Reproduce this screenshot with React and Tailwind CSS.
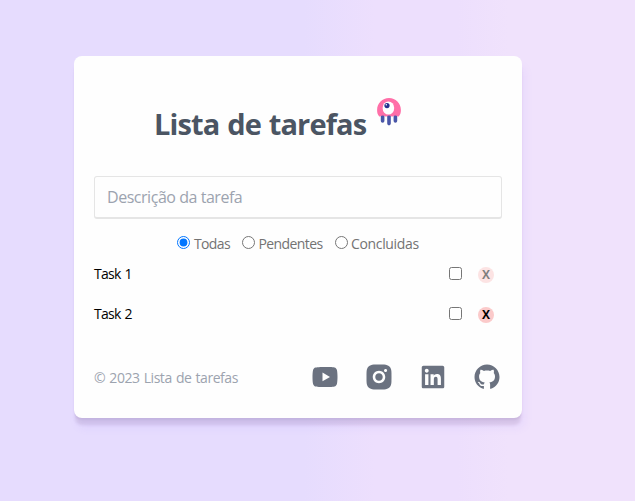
import {
  RiYoutubeFill,
  RiInstagramFill,
  RiLinkedinBoxFill,
  RiGithubFill,
} from "react-icons/ri";

const filters = [
  { label: "Todas", box: "w-[65px]", text: "ml-[4px]", spacing: "tracking-[-0.65px]" },
  { label: "Pendentes", box: "w-[93px]", text: "ml-[3.5px]", spacing: "tracking-[-0.6px]" },
  { label: "Concluidas", box: "w-[84px]", text: "ml-[3px]", spacing: "tracking-[-0.35px]" },
];

const tasks = [
  { name: "Task 1", button: "opacity-50" },
  { name: "Task 2", button: "opacity-100" },
];

function Mascot() {
  return (
    <svg viewBox="0 0 26 30" className="ml-[10px] mt-[-25px] h-[30px] w-[26px] shrink-0">
      <g stroke="#4956a8" strokeWidth="3.6" strokeLinecap="round">
        <path d="M6.6 18v6M13 18v8.6M19.4 18v6" />
      </g>
      <path
        d="M3.5 19.6C1.6 18 1.1 15.6 1.1 13 1.1 6.3 6.4 1 13 1s11.9 5.3 11.9 12c0 2.6-.6 5-2.4 6.6-.8.3-1.2-1.1-3.3-1.1-1.9 0-1.9 1.1-3.1 1.1s-1.2-1.1-3.1-1.1-1.9 1.1-3.1 1.1-1.2-1.1-3.1-1.1c-2.1 0-2.5 1.4-3.3 1.1z"
        fill="#ff6fa8"
      />
      <ellipse cx="12.4" cy="11" rx="5.8" ry="6.6" fill="#fff" />
      <circle cx="11" cy="8.6" r="2.6" fill="#24308f" />
      <circle cx="10.3" cy="7.8" r="0.8" fill="#fff" />
    </svg>
  );
}

export default function App() {
  return (
    <div className="h-[501px] w-[635px] overflow-hidden bg-[linear-gradient(90deg,#e6dcfe_0%,#e6dcfe_48%,#eddffd_59%,#eddffd_72%,#f0e2fc_80%,#f0e2fc_100%)] pl-[74px] pt-14 font-['Open_Sans','Noto_Sans',sans-serif]">
      <main className="flex h-[362px] w-[448px] flex-col rounded-lg bg-[#fefefe] px-5 shadow-[0px_3px_2px_-1px_rgba(70,40,90,0.08),0px_8px_3px_-1px_rgba(90,60,100,0.12),3px_10px_8px_0px_rgba(150,120,255,0.09)]">
        <header className="flex h-[120px] items-center pl-[60px] pt-[16px]">
          <h1 className="w-[212px] whitespace-nowrap text-[29px] font-bold leading-9 tracking-[-0.85px] text-[#4b5563] [word-spacing:1px]">
            Lista de tarefas
          </h1>
          <Mascot />
        </header>

        <input
          type="text"
          placeholder="Descrição da tarefa"
          className="h-[43px] w-full rounded-[3px] border border-b-2 border-[#e5e5e5] px-3 text-base tracking-[-0.46px] placeholder:text-[#9ca3af]"
        />

        <div className="mt-[15px] flex h-5 pl-[83px] text-sm leading-5 text-[#737373]">
          {filters.map((filter) => (
            <label key={filter.label} className={`flex ${filter.box}`}>
              <input
                type="radio"
                name="filter"
                defaultChecked={filter.label === "Todas"}
                className="mt-[2px] h-[13px] w-[13px] shrink-0"
              />
              <span className={`whitespace-nowrap ${filter.text} ${filter.spacing}`}>{filter.label}</span>
            </label>
          ))}
        </div>

        <ul className="mt-[10px] flex flex-col gap-5">
          {tasks.map((task) => (
            <li key={task.name} className="flex h-5 items-center pr-2 text-sm text-black">
              <span className="mr-auto tracking-[-0.75px] [word-spacing:1px]">{task.name}</span>
              <input type="checkbox" className="mb-[2px] mr-4 h-[13px] w-[13px]" />
              <button
                className={`mt-[2px] flex h-4 w-4 items-center justify-center rounded-full bg-[#fbcaca] text-xs font-bold leading-4 ${task.button}`}
              >
                X
              </button>
            </li>
          ))}
        </ul>

        <footer className="mt-[38px] flex h-[30px] items-center justify-between">
          <p className="whitespace-nowrap pt-[2px] text-sm tracking-[-0.46px] text-[#9ca3af] [word-spacing:1px]">© 2023 Lista de tarefas</p>
          <nav className="flex gap-6 text-[30px] text-[#6b7280]">
            <RiYoutubeFill />
            <RiInstagramFill />
            <RiLinkedinBoxFill />
            <RiGithubFill />
          </nav>
        </footer>
      </main>
    </div>
  );
}
